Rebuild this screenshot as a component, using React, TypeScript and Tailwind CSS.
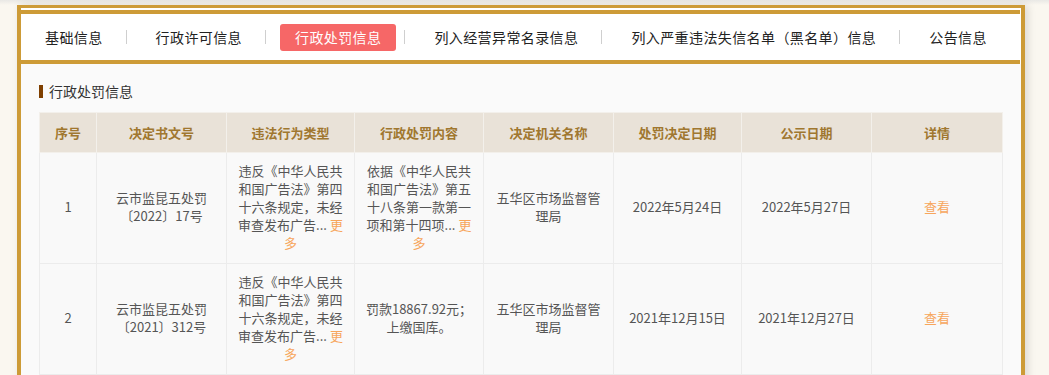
const tabs = [
  "基础信息",
  "行政许可信息",
  "行政处罚信息",
  "列入经营异常名录信息",
  "列入严重违法失信名单（黑名单）信息",
  "公告信息",
];

const columns = [
  { title: "序号", width: 57 },
  { title: "决定书文号", width: 130 },
  { title: "违法行为类型", width: 128 },
  { title: "行政处罚内容", width: 129 },
  { title: "决定机关名称", width: 130 },
  { title: "处罚决定日期", width: 128 },
  { title: "公示日期", width: 130 },
  { title: "详情", width: 131 },
];

type Row = {
  no: number;
  doc: string;
  type: string;
  typeMore: boolean;
  content: string;
  contentMore: boolean;
  org: string;
  decided: string;
  published: string;
};

const rows: Row[] = [
  {
    no: 1,
    doc: "云市监昆五处罚〔2022〕17号",
    type: "违反《中华人民共和国广告法》第四十六条规定，未经审查发布广告...",
    typeMore: true,
    content: "依据《中华人民共和国广告法》第五十八条第一款第一项和第十四项...",
    contentMore: true,
    org: "五华区市场监督管理局",
    decided: "2022年5月24日",
    published: "2022年5月27日",
  },
  {
    no: 2,
    doc: "云市监昆五处罚〔2021〕312号",
    type: "违反《中华人民共和国广告法》第四十六条规定，未经审查发布广告...",
    typeMore: true,
    content: "罚款18867.92元；上缴国库。",
    contentMore: false,
    org: "五华区市场监督管理局",
    decided: "2021年12月15日",
    published: "2021年12月27日",
  },
];

function MoreText({ text, more }: { text: string; more: boolean }) {
  return (
    <>
      {text}
      {more && (
        <>
          {" "}
          <a className="cursor-pointer text-[#f7a65c]">更多</a>
        </>
      )}
    </>
  );
}

function TabBar() {
  return (
    <div className="mr-px flex h-[54px] items-center border-y-4 border-[#cd9b37] bg-white pl-[9px]">
      {tabs.map((t, i) => (
        <div key={t} className="flex items-center">
          {i > 0 && <span className="ml-2 mr-[14px] h-[14px] w-px bg-[#cfcfcf]" />}
          <span
            className={
              i === 2
                ? "h-[27px] rounded-[3px] bg-[#f66767] px-[15px] text-[14px] leading-[27px] tracking-[0.4px] text-white"
                : "h-[27px] px-[15px] text-[14px] leading-[27px] tracking-[0.4px] text-[#222]"
            }
          >
            {t}
          </span>
        </div>
      ))}
    </div>
  );
}

export default function App() {
  return (
    <div className="min-h-screen bg-[#faf7f0] font-['Noto_Sans_CJK_SC',sans-serif] [text-spacing-trim:space-all]">
      <div className="h-[5px] bg-gradient-to-b from-[#e9e8e5] to-[#faf7f0]" />
      <div className="ml-[17px] w-[1008px] border-x-4 border-t-[3px] border-[#cd9b37] bg-white pt-[2px] shadow-[3px_0_8px_rgba(0,0,0,0.12)]">
        <TabBar />
        <div className="bg-[#fafafa] px-[18px] pb-6 pt-[17px]">
          <div className="flex h-[20px] items-center">
            <span className="mr-[6px] h-[13px] w-1 bg-[#7f3f00]" />
            <span className="text-[14px] text-[#333]">行政处罚信息</span>
          </div>
          <table className="mt-[11px] w-[963px] table-fixed border-collapse text-center">
            <colgroup>
              {columns.map((c) => (
                <col key={c.title} style={{ width: c.width }} />
              ))}
            </colgroup>
            <thead>
              <tr>
                {columns.map((c) => (
                  <th
                    key={c.title}
                    className="h-[40px] border border-[#f3f0eb] bg-[#e9e2d8] text-[13px] font-bold text-[#a0772f]"
                  >
                    {c.title}
                  </th>
                ))}
              </tr>
            </thead>
            <tbody className="text-[13px] leading-[18px] text-[#555]">
              {rows.map((r) => (
                <tr key={r.no}>
                  <td className="border border-[#ececec] bg-[#f9f9f9] px-[10px] pb-[11px] pt-[9px]">{r.no}</td>
                  <td className="border border-[#ececec] bg-[#f9f9f9] px-[10px] pb-[11px] pt-[9px]">{r.doc}</td>
                  <td className="border border-[#ececec] bg-[#f9f9f9] px-[10px] pb-[11px] pt-[9px]">
                    <MoreText text={r.type} more={r.typeMore} />
                  </td>
                  <td className="border border-[#ececec] bg-[#f9f9f9] px-[10px] pb-[11px] pt-[9px]">
                    <MoreText text={r.content} more={r.contentMore} />
                  </td>
                  <td className="border border-[#ececec] bg-[#f9f9f9] px-[10px] pb-[11px] pt-[9px]">{r.org}</td>
                  <td className="border border-[#ececec] bg-[#f9f9f9] px-[10px] pb-[11px] pt-[9px]">{r.decided}</td>
                  <td className="border border-[#ececec] bg-[#f9f9f9] px-[10px] pb-[11px] pt-[9px]">{r.published}</td>
                  <td className="border border-[#ececec] bg-[#f9f9f9] px-[10px] pb-[11px] pt-[9px]">
                    <a className="cursor-pointer text-[#f7a65c]">查看</a>
                  </td>
                </tr>
              ))}
            </tbody>
          </table>
        </div>
      </div>
    </div>
  );
}
